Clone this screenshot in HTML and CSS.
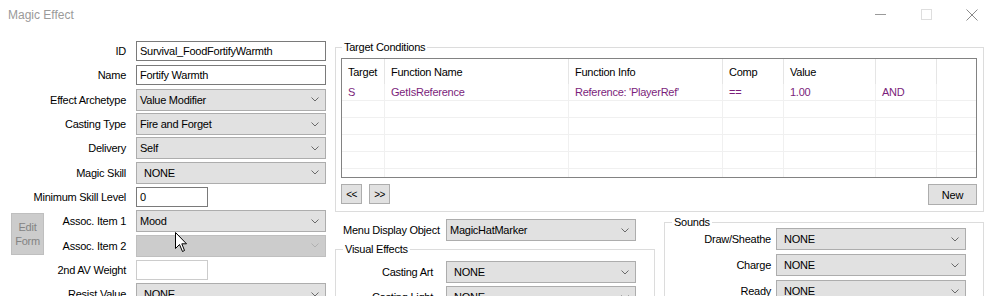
FILE: index.html
```html
<!DOCTYPE html>
<html>
<head>
<meta charset="utf-8">
<title>Magic Effect</title>
<link rel="stylesheet" href="styles.css">
</head>
<body>
<div class="titlebar">
  <span class="title">Magic Effect</span>
  <div class="controls">
    <div class="cbtn"><svg width="11" height="11" viewBox="0 0 11 11"><path d="M0 5.5H11" stroke="#9a9a9a" stroke-width="1"/></svg></div>
    <div class="cbtn"><svg width="11" height="11" viewBox="0 0 11 11"><rect x="0.5" y="0.5" width="10" height="10" fill="none" stroke="#dedede"/></svg></div>
    <div class="cbtn"><svg width="12" height="12" viewBox="0 0 12 12"><path d="M0.5 0.5L11.5 11.5M11.5 0.5L0.5 11.5" stroke="#8a8a8a" stroke-width="1"/></svg></div>
  </div>
</div>

<div class="main">
  <div class="form">
    <label class="lbl">ID</label>
    <div class="input">Survival_FoodFortifyWarmth</div>

    <label class="lbl">Name</label>
    <div class="input">Fortify Warmth</div>

    <label class="lbl">Effect Archetype</label>
    <div class="combo"><span>Value Modifier</span><svg class="chev" width="8" height="5" viewBox="0 0 8 5"><path d="M0.5 0.5L4 4L7.5 0.5" fill="none" stroke="#6a6a6a"/></svg></div>

    <label class="lbl">Casting Type</label>
    <div class="combo"><span>Fire and Forget</span><svg class="chev" width="8" height="5" viewBox="0 0 8 5"><path d="M0.5 0.5L4 4L7.5 0.5" fill="none" stroke="#6a6a6a"/></svg></div>

    <label class="lbl">Delivery</label>
    <div class="combo"><span>Self</span><svg class="chev" width="8" height="5" viewBox="0 0 8 5"><path d="M0.5 0.5L4 4L7.5 0.5" fill="none" stroke="#6a6a6a"/></svg></div>

    <label class="lbl">Magic Skill</label>
    <div class="combo"><span class="none">NONE</span><svg class="chev" width="8" height="5" viewBox="0 0 8 5"><path d="M0.5 0.5L4 4L7.5 0.5" fill="none" stroke="#6a6a6a"/></svg></div>

    <label class="lbl">Minimum Skill Level</label>
    <div class="input short">0</div>

    <button class="edit-btn">Edit<br>Form</button>
    <label class="lbl sub">Assoc. Item 1</label>
    <div class="combo"><span>Mood</span><svg class="chev" width="8" height="5" viewBox="0 0 8 5"><path d="M0.5 0.5L4 4L7.5 0.5" fill="none" stroke="#6a6a6a"/></svg></div>

    <label class="lbl sub">Assoc. Item 2</label>
    <div class="combo disabled"><span></span><svg class="chev" width="8" height="5" viewBox="0 0 8 5"><path d="M0.5 0.5L4 4L7.5 0.5" fill="none" stroke="#b0b0b0"/></svg></div>

    <label class="lbl">2nd AV Weight</label>
    <div class="input short disabled"></div>

    <label class="lbl">Resist Value</label>
    <div class="combo"><span class="none">NONE</span><svg class="chev" width="8" height="5" viewBox="0 0 8 5"><path d="M0.5 0.5L4 4L7.5 0.5" fill="none" stroke="#6a6a6a"/></svg></div>
  </div>

  <div class="right">
    <fieldset class="group target">
      <legend>Target Conditions</legend>
      <div class="list">
        <table class="cond">
          <colgroup>
            <col class="c1"><col class="c2"><col class="c3"><col class="c4"><col class="c5"><col class="c6"><col>
          </colgroup>
          <thead>
            <tr><th>Target</th><th>Function Name</th><th>Function Info</th><th>Comp</th><th>Value</th><th></th><th class="fill"></th></tr>
          </thead>
          <tbody>
            <tr class="data"><td>S</td><td>GetIsReference</td><td>Reference: 'PlayerRef'</td><td>==</td><td>1.00</td><td>AND</td><td class="fill"></td></tr>
            <tr><td></td><td></td><td></td><td></td><td></td><td></td><td class="fill"></td></tr>
            <tr><td></td><td></td><td></td><td></td><td></td><td></td><td class="fill"></td></tr>
            <tr><td></td><td></td><td></td><td></td><td></td><td></td><td class="fill"></td></tr>
            <tr><td></td><td></td><td></td><td></td><td></td><td></td><td class="fill"></td></tr>
            <tr><td></td><td></td><td></td><td></td><td></td><td></td><td class="fill"></td></tr>
          </tbody>
        </table>
      </div>
      <div class="btnrow">
        <button class="btn nav">&lt;&lt;</button>
        <button class="btn nav">&gt;&gt;</button>
        <button class="btn new">New</button>
      </div>
    </fieldset>

    <div class="lower">
      <div class="lower-left">
        <div class="menu-row">
          <label class="menu-lbl">Menu Display Object</label>
          <div class="combo"><span>MagicHatMarker</span><svg class="chev" width="8" height="5" viewBox="0 0 8 5"><path d="M0.5 0.5L4 4L7.5 0.5" fill="none" stroke="#6a6a6a"/></svg></div>
        </div>
        <fieldset class="group visual">
          <legend>Visual Effects</legend>
          <div class="frow">
            <label class="flbl">Casting Art</label>
            <div class="combo"><span class="none">NONE</span><svg class="chev" width="8" height="5" viewBox="0 0 8 5"><path d="M0.5 0.5L4 4L7.5 0.5" fill="none" stroke="#6a6a6a"/></svg></div>
          </div>
          <div class="frow">
            <label class="flbl">Casting Light</label>
            <div class="combo"><span class="none">NONE</span><svg class="chev" width="8" height="5" viewBox="0 0 8 5"><path d="M0.5 0.5L4 4L7.5 0.5" fill="none" stroke="#6a6a6a"/></svg></div>
          </div>
        </fieldset>
      </div>

      <fieldset class="group sounds">
        <legend>Sounds</legend>
        <div class="srow">
          <label class="slbl">Draw/Sheathe</label>
          <div class="combo"><span class="none">NONE</span><svg class="chev" width="8" height="5" viewBox="0 0 8 5"><path d="M0.5 0.5L4 4L7.5 0.5" fill="none" stroke="#6a6a6a"/></svg></div>
        </div>
        <div class="srow">
          <label class="slbl">Charge</label>
          <div class="combo"><span class="none">NONE</span><svg class="chev" width="8" height="5" viewBox="0 0 8 5"><path d="M0.5 0.5L4 4L7.5 0.5" fill="none" stroke="#6a6a6a"/></svg></div>
        </div>
        <div class="srow">
          <label class="slbl">Ready</label>
          <div class="combo"><span class="none">NONE</span><svg class="chev" width="8" height="5" viewBox="0 0 8 5"><path d="M0.5 0.5L4 4L7.5 0.5" fill="none" stroke="#6a6a6a"/></svg></div>
        </div>
      </fieldset>
    </div>
  </div>
</div>

<svg class="cursor" width="13" height="21" viewBox="0 0 13 21"><path d="M0.5 0.5V16.5L4.5 12.5L7.5 19.5L9.5 18.5L6.8 11.8H11.5Z" fill="#fff" stroke="#000" stroke-width="1" stroke-linejoin="miter"/></svg>
</body>
</html>
```

FILE: styles.css
```css
html, body {
  margin: 0;
  padding: 0;
  height: 100%;
  overflow: hidden;
  background: #ffffff;
}

body {
  position: relative;
  font-family: "Liberation Sans", Arial, sans-serif;
  font-size: 11px;
  letter-spacing: -0.25px;
  color: #000;
}

/* title bar */
.titlebar {
  height: 38px;
  display: flex;
  align-items: flex-start;
}

.title {
  margin: 8px 0 0 8px;
  font-size: 12px;
  line-height: 14px;
  letter-spacing: 0;
  color: #9a9a9a;
}

.controls {
  margin-left: auto;
  margin-right: -5px;
  display: flex;
}

.cbtn {
  width: 46px;
  height: 29px;
  display: flex;
  align-items: center;
  justify-content: center;
}

/* layout */
.main {
  display: flex;
  align-items: flex-start;
}

/* left form */
.form {
  display: grid;
  grid-template-columns: 33px 72px 190px;
  grid-auto-rows: 24.3px;
  column-gap: 10px;
  padding-left: 11px;
  padding-top: 1px;
  align-items: center;
}

.lbl {
  grid-column: 1 / 3;
  text-align: right;
  white-space: nowrap;
}

.lbl.sub {
  grid-column: 2;
}

.input {
  box-sizing: border-box;
  height: 20px;
  border: 1px solid #7a7a7a;
  background: #fff;
  padding: 0 3px;
  line-height: 18px;
  white-space: nowrap;
  overflow: hidden;
}

.input.short {
  width: 72px;
}

.input.disabled {
  border-color: #cccccc;
}

.combo {
  box-sizing: border-box;
  height: 22px;
  width: 190px;
  border: 1px solid #adadad;
  background: #e1e1e1;
  display: flex;
  align-items: center;
  padding: 0 6px 0 3px;
  white-space: nowrap;
}

.combo span {
  flex: 1;
}

.combo .none {
  padding-left: 4px;
}

.combo.disabled {
  background: #cccccc;
  border-color: #bfbfbf;
}

.chev {
  flex: none;
  display: block;
}

.edit-btn {
  grid-column: 1;
  grid-row: 8 / 10;
  align-self: start;
  margin-top: 4px;
  width: 33px;
  height: 42px;
  padding: 0;
  box-sizing: border-box;
  border: 1px solid #bfbfbf;
  background: #cccccc;
  color: #838383;
  font-family: inherit;
  font-size: 11px;
  letter-spacing: -0.25px;
  line-height: 14px;
}

/* right column */
.right {
  width: 649px;
  margin-left: 9px;
  display: flex;
  flex-direction: column;
}

.group {
  margin: 0;
  border: 1px solid #dcdcdc;
  min-width: 0;
}

.group legend {
  padding: 0 2px;
  line-height: 12px;
}

.target {
  margin-top: 3px;
  padding: 0 6px 6px 5px;
}

.target legend {
  margin-left: 1px;
}

.list {
  margin-top: 5px;
  height: 118px;
  border: 1px solid #828282;
  overflow: hidden;
  background: #fff;
}

.cond {
  table-layout: fixed;
  width: 100%;
  border-collapse: separate;
  border-spacing: 0;
}

.cond col.c1 { width: 43px; }
.cond col.c2 { width: 184px; }
.cond col.c3 { width: 154px; }
.cond col.c4 { width: 61px; }
.cond col.c5 { width: 92px; }
.cond col.c6 { width: 61px; }

.cond th {
  height: 25px;
  padding: 0 0 0 6px;
  font-weight: normal;
  text-align: left;
  border-right: 1px solid #e5e5e5;
  box-sizing: border-box;
  white-space: nowrap;
}

.cond td {
  height: 17px;
  padding: 0 0 0 6px;
  border-right: 1px solid #f0f0f0;
  border-bottom: 1px solid #f0f0f0;
  box-sizing: border-box;
  white-space: nowrap;
  line-height: 14px;
}

.cond .fill {
  border-right: none;
}

.cond th.fill {
  border-right: none;
}

.cond tr.data td {
  color: #7b1e7b;
}

.btnrow {
  display: flex;
  gap: 7px;
  margin-top: 6px;
}

.btn {
  box-sizing: border-box;
  border: 1px solid #adadad;
  background: #e1e1e1;
  font-family: inherit;
  font-size: 11px;
  letter-spacing: -0.25px;
  color: #000;
  padding: 0;
}

.btn.nav {
  width: 21px;
  height: 20px;
  font-size: 10px;
  letter-spacing: -0.5px;
}

.btn.new {
  margin-left: auto;
  width: 49px;
  height: 21px;
}

/* lower part */
.lower {
  display: flex;
  gap: 9px;
  align-items: flex-start;
}

.lower-left {
  width: 320px;
  display: flex;
  flex-direction: column;
}

.menu-row {
  display: flex;
  align-items: center;
  gap: 4px;
  padding-left: 8px;
  margin-top: 7px;
}

.menu-lbl {
  width: 99px;
  white-space: nowrap;
}

.visual {
  margin-top: 2px;
  padding: 6px 6px 6px 6px;
}

.visual legend {
  margin-left: 1px;
}

.frow {
  display: flex;
  align-items: center;
  gap: 13px;
  margin-bottom: 3px;
}

.flbl {
  width: 91px;
  text-align: right;
  white-space: nowrap;
}

.sounds {
  flex: 1;
  margin-top: 4px;
  padding: 0 6px 6px 6px;
}

.sounds legend {
  margin-left: 1px;
}

.srow {
  display: flex;
  align-items: center;
  gap: 5px;
  margin-bottom: 4px;
}

.slbl {
  width: 100px;
  text-align: right;
  white-space: nowrap;
}

/* mouse pointer overlay */
.cursor {
  position: absolute;
  left: 175px;
  top: 232px;
}
```
